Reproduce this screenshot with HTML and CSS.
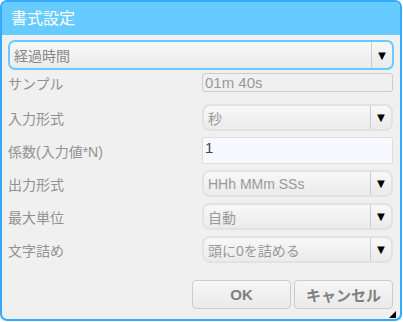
FILE: index.html
```html
<!DOCTYPE html>
<html lang="ja">
<head>
    <meta charset="UTF-8">
    <title>書式設定</title>
    <link rel="stylesheet" href="styles.css">
</head>
<body>
    <div class="dialog">
        <div class="dialog-title">書式設定</div>

        <!-- Kind of value -->
        <div class="select select-main">
            <span class="select-text">経過時間</span>
            <span class="select-arrow">▼</span>
        </div>

        <div class="form-grid">
            <div class="label label-sample">サンプル</div>
            <div class="sample">01m 40s</div>

            <div class="label">入力形式</div>
            <div class="select">
                <span class="select-text">秒</span>
                <span class="select-arrow">▼</span>
            </div>

            <div class="label">係数(入力値*N)</div>
            <div class="input">1</div>

            <div class="label">出力形式</div>
            <div class="select">
                <span class="select-text">HHh MMm SSs</span>
                <span class="select-arrow">▼</span>
            </div>

            <div class="label">最大単位</div>
            <div class="select">
                <span class="select-text">自動</span>
                <span class="select-arrow">▼</span>
            </div>

            <div class="label">文字詰め</div>
            <div class="select">
                <span class="select-text">頭に0を詰める</span>
                <span class="select-arrow">▼</span>
            </div>
        </div>

        <div class="buttons">
            <button class="btn">OK</button>
            <button class="btn">キャンセル</button>
        </div>

        <div class="grip"></div>
    </div>
</body>
</html>
```

FILE: styles.css
```css
body {
    margin: 0;
    background-color: #fff;
    font-family: "Liberation Sans", "Noto Sans CJK JP", sans-serif;
}

.dialog {
    position: relative;
    width: 402px;
    height: 321px;
    box-sizing: border-box;
    border: 2px solid #33aaff;
    border-radius: 7px;
    background-color: #f0f0f0;
    overflow: hidden;
}

.dialog-title {
    height: 33px;
    line-height: 33px;
    padding-left: 9px;
    background-color: #66ccff;
    color: #fff;
    font-size: 16px;
}

.select {
    display: flex;
    height: 27px;
    box-sizing: border-box;
    border: 2px solid #e2e2e2;
    border-radius: 8px;
    background: linear-gradient(#f8f8f8, #ebebeb);
    color: #999;
    font-size: 14px;
}

.select-main {
    margin: 5px 6px 0 6px;
    height: 30px;
    border-color: #66ccff;
    border-radius: 7px;
    color: #888;
}

.select-text {
    flex: 1;
    display: flex;
    align-items: center;
    padding-left: 4px;
}

.select-arrow {
    width: 20px;
    display: flex;
    align-items: center;
    justify-content: center;
    border-left: 1px solid #ccc;
    color: #000;
    font-size: 13px;
}

.form-grid {
    display: grid;
    grid-template-columns: 194px 191px;
    row-gap: 6px;
    margin-top: 3px;
    padding: 0 6px;
}

.label {
    align-self: center;
    color: #929292;
    font-size: 14px;
}

.label-sample {
    margin-bottom: 5px;
}

.sample {
    height: 19px;
    box-sizing: border-box;
    margin-bottom: 5px;
    border: 1px solid #ccc;
    border-radius: 3px;
    padding-left: 2px;
    color: #999;
    font-size: 15px;
    line-height: 17px;
}

.input {
    height: 27px;
    box-sizing: border-box;
    border: 1px solid #ddd;
    border-radius: 2px;
    background-color: #f8f8ff;
    padding: 1px 2px;
    color: #444;
    font-size: 15px;
}

.buttons {
    display: flex;
    justify-content: flex-end;
    gap: 3px;
    margin-top: 17px;
    padding-right: 7px;
}

.btn {
    width: 99px;
    height: 29px;
    border: 1px solid #ccc;
    border-radius: 4px;
    background: linear-gradient(#f6f6f6, #eaeaea);
    color: #808080;
    font-family: "Liberation Sans", "Noto Sans CJK JP", sans-serif;
    font-size: 15px;
    font-weight: bold;
}

.grip {
    position: absolute;
    right: 4px;
    bottom: 1px;
    width: 0;
    height: 0;
    border-left: 7px solid transparent;
    border-bottom: 7px solid #000;
}
```
